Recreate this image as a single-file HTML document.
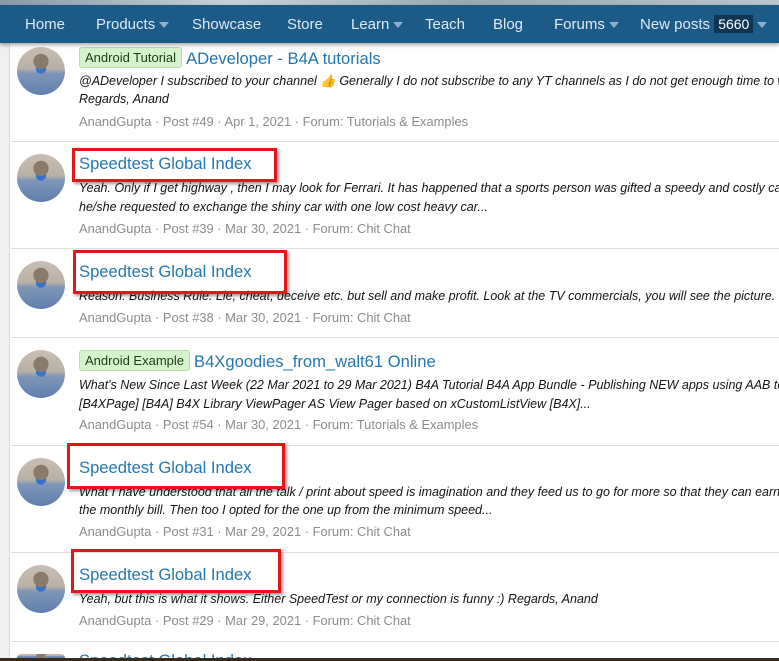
<!DOCTYPE html>
<html style="width:779px;height:661px;overflow:hidden"><head><meta charset="utf-8"><style>
*{margin:0;padding:0;box-sizing:border-box}
body{width:779px;height:661px;overflow:hidden;background:#fff;font-family:"Liberation Sans",sans-serif;position:relative}
.top{position:absolute;left:0;top:0;width:779px;height:6px;background:linear-gradient(90deg,#8a9aa6,#c7d3da 30%,#9aa8b0 60%,#b9c6cc)}
.nav{position:absolute;left:0;top:5px;width:779px;height:38px;background:#1c5a88;box-shadow:0 2px 4px rgba(0,0,0,.35);z-index:5}
.nav span{position:absolute;top:11px;color:#dfe9f2;font-size:15px;white-space:nowrap}
.car{display:inline-block;width:0;height:0;border-left:5px solid transparent;border-right:5px solid transparent;border-top:6px solid #8fb0cc;vertical-align:middle;margin-left:4px}
.badge{background:#0f3552;color:#fff;padding:1px 4px;font-size:14px}
.side{position:absolute;left:0;top:43px;width:10px;height:618px;background:#f0f0f0;border-right:1px solid #dcdcdc}
.sep{position:absolute;left:11px;width:768px;height:1px;background:#e0e0e0}
.av{position:absolute;left:17px;width:48px;height:48px;border-radius:50%;background:radial-gradient(circle at 50% 30%,#8a7a6a 0 18%,transparent 19%),radial-gradient(circle at 50% 45%,#3a74c8 0 14%,transparent 15%),linear-gradient(180deg,#c9bfb4 0%,#b8b0a6 45%,#7f95b8 55%,#5f7fae 100%)}
.t{position:absolute;left:79px;font-size:16.6px;color:#2577b1;white-space:nowrap}
.lab{display:inline-block;background:#d7f2cf;border:1px solid #b6e0a8;color:#1d3d14;font-size:13px;padding:2px 5px;border-radius:3px;margin-right:4px;vertical-align:2px}
.s{position:absolute;left:79px;font-size:12.5px;font-style:italic;color:#141414;white-space:nowrap}
.m{position:absolute;left:79px;font-size:12.9px;color:#8c8c8c;white-space:nowrap}
.box{position:absolute;border:3px solid #e8141b;box-shadow:2px 2px 3px rgba(0,0,0,.4)}
</style></head><body>
<div class="top"></div>
<div class="nav">
<span style="left:25px">Home</span>
<span style="left:96px">Products<i class="car"></i></span>
<span style="left:192px">Showcase</span>
<span style="left:287px">Store</span>
<span style="left:351px">Learn<i class="car"></i></span>
<span style="left:425px">Teach</span>
<span style="left:493px">Blog</span>
<span style="left:554px">Forums<i class="car"></i></span>
<span style="left:640px">New posts <b class="badge" style="font-weight:normal">5660</b><i class="car"></i></span>
</div>
<div class="side"></div>

<div class="av" style="top:47px"></div>
<div class="t" style="top:47px"><span class="lab">Android Tutorial</span>ADeveloper - B4A tutorials</div>
<div class="s" style="top:74px">@ADeveloper I subscribed to your channel 👍 Generally I do not subscribe to any YT channels as I do not get enough time to watch</div>
<div class="s" style="top:92px">Regards, Anand</div>
<div class="m" style="top:114px">AnandGupta · Post #49 · Apr 1, 2021 · Forum: Tutorials &amp; Examples</div>
<div class="sep" style="top:141px"></div>

<div class="av" style="top:154px"></div>
<div class="t" style="top:154px">Speedtest Global Index</div>
<div class="s" style="top:181px">Yeah. Only if I get highway , then I may look for Ferrari. It has happened that a sports person was gifted a speedy and costly car</div>
<div class="s" style="top:200px">he/she requested to exchange the shiny car with one low cost heavy car...</div>
<div class="m" style="top:221px">AnandGupta · Post #39 · Mar 30, 2021 · Forum: Chit Chat</div>
<div class="box" style="left:72px;top:148px;width:205px;height:34px"></div>
<div class="sep" style="top:248px"></div>

<div class="av" style="top:261px"></div>
<div class="t" style="top:262px">Speedtest Global Index</div>
<div class="s" style="top:289px">Reason: Business Rule. Lie, cheat, deceive etc. but sell and make profit. Look at the TV commercials, you will see the picture. How</div>
<div class="m" style="top:310px">AnandGupta · Post #38 · Mar 30, 2021 · Forum: Chit Chat</div>
<div class="box" style="left:73px;top:250px;width:214px;height:44px"></div>
<div class="sep" style="top:337px"></div>

<div class="av" style="top:350px"></div>
<div class="t" style="top:350px"><span class="lab">Android Example</span>B4Xgoodies_from_walt61 Online</div>
<div class="s" style="top:378px">What's New Since Last Week (22 Mar 2021 to 29 Mar 2021) B4A Tutorial B4A App Bundle - Publishing NEW apps using AAB to</div>
<div class="s" style="top:397px">[B4XPage] [B4A] B4X Library ViewPager AS View Pager based on xCustomListView [B4X]...</div>
<div class="m" style="top:417px">AnandGupta · Post #54 · Mar 30, 2021 · Forum: Tutorials &amp; Examples</div>
<div class="sep" style="top:445px"></div>

<div class="av" style="top:458px"></div>
<div class="t" style="top:458px">Speedtest Global Index</div>
<div class="s" style="top:485px">What I have understood that all the talk / print about speed is imagination and they feed us to go for more so that they can earn</div>
<div class="s" style="top:503px">the monthly bill. Then too I opted for the one up from the minimum speed...</div>
<div class="m" style="top:524px">AnandGupta · Post #31 · Mar 29, 2021 · Forum: Chit Chat</div>
<div class="box" style="left:67px;top:443px;width:218px;height:46px"></div>
<div class="sep" style="top:552px"></div>

<div class="av" style="top:565px"></div>
<div class="t" style="top:565px">Speedtest Global Index</div>
<div class="s" style="top:592px">Yeah, but this is what it shows. Either SpeedTest or my connection is funny :) Regards, Anand</div>
<div class="m" style="top:613px">AnandGupta · Post #29 · Mar 29, 2021 · Forum: Chit Chat</div>
<div class="box" style="left:71px;top:549px;width:210px;height:44px"></div>
<div class="sep" style="top:641px"></div>
<div class="av" style="top:654px;height:4px;border-radius:24px 24px 0 0"></div>
<div class="t" style="top:651px;height:7px;overflow:hidden">Speedtest Global Index</div>
<div style="position:absolute;left:0;top:658px;width:779px;height:3px;background:#3a2a1a"></div>
</body></html>
